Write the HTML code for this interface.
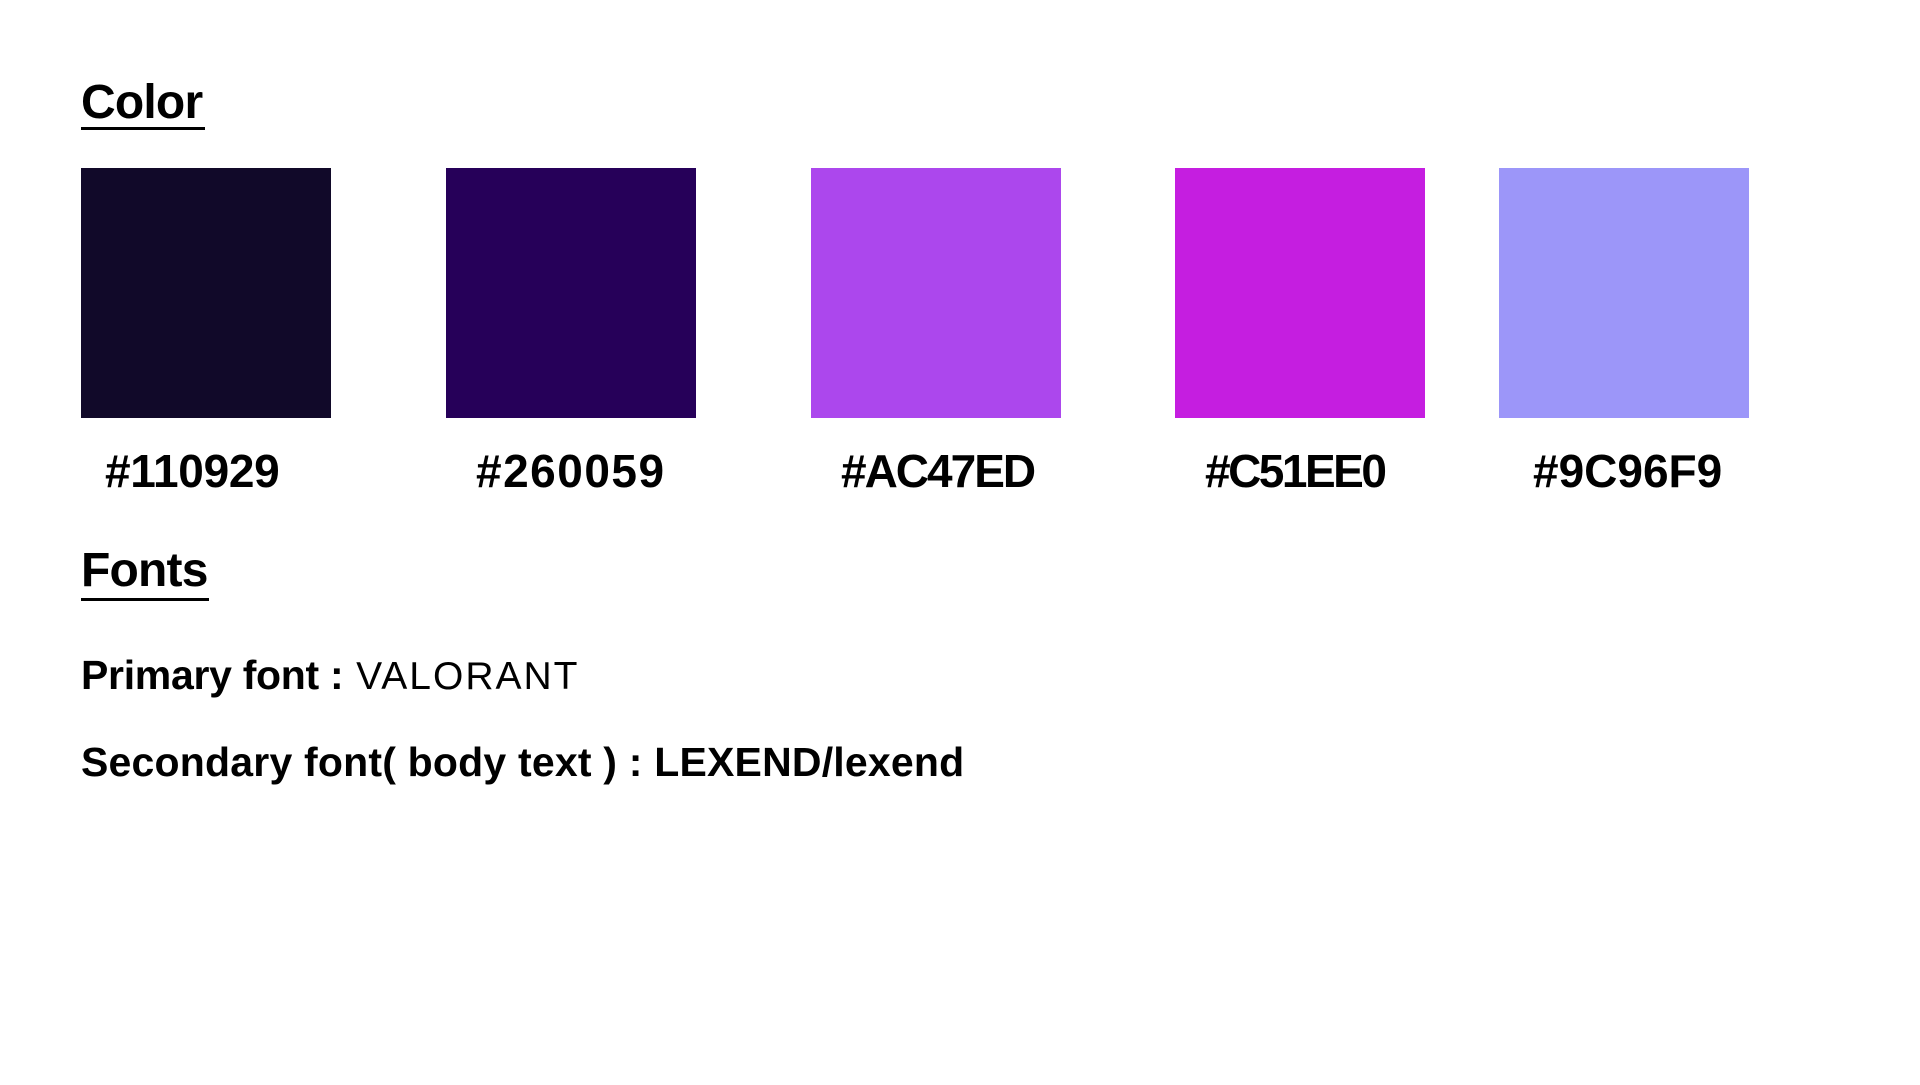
<!DOCTYPE html>
<html><head><meta charset="utf-8"><style>
body{margin:0;width:1920px;height:1085px;background:#fff;position:relative;overflow:hidden;font-family:"Liberation Sans",sans-serif;color:#000}
.a{position:absolute;white-space:nowrap;line-height:1}
.h{font-weight:bold;font-size:48px;letter-spacing:-0.8px}
.u{position:absolute;height:3px;background:#000}
.sw{position:absolute;top:168px;width:250px;height:250px}
.l{font-weight:bold;font-size:46px;letter-spacing:0px;top:448px}
.t{font-weight:bold;font-size:41px;letter-spacing:-0.3px}
</style></head><body>
<div class="a h" style="left:81px;top:79px">Color</div>
<div class="u" style="left:81px;top:127px;width:124px"></div>
<div class="sw" style="left:81px;background:#110929"></div>
<div class="sw" style="left:446px;background:#260059"></div>
<div class="sw" style="left:811px;background:#AC47ED"></div>
<div class="sw" style="left:1175px;background:#C51EE0"></div>
<div class="sw" style="left:1499px;background:#9C96F9"></div>
<div class="a l" style="left:105px;letter-spacing:-0.3px">#110929</div>
<div class="a l" style="left:476px;letter-spacing:1.5px">#260059</div>
<div class="a l" style="left:841px;letter-spacing:-2px">#AC47ED</div>
<div class="a l" style="left:1205px;letter-spacing:-2.5px">#C51EE0</div>
<div class="a l" style="left:1533px">#9C96F9</div>
<div class="a h" style="left:81px;top:547px">Fonts</div>
<div class="u" style="left:81px;top:598px;width:128px"></div>
<div class="a t" style="left:81px;top:655px">Primary font :<span style="font-weight:normal;letter-spacing:2px;font-size:39px"> VALORANT</span></div>
<div class="a t" style="left:81px;top:742px;letter-spacing:0.2px">Secondary font( body text ) : LEXEND/lexend</div>
</body></html>
